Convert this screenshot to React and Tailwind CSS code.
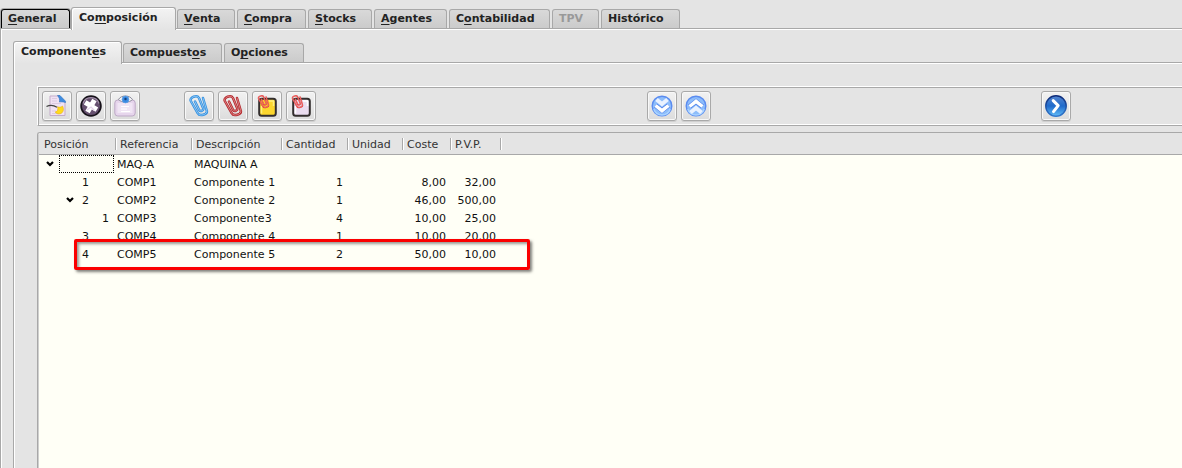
import React from "react";

const MAIN_TABS = [
  { before: "", key: "G", after: "eneral", width: "w-[69px]", focused: true },
  { before: "Co", key: "m", after: "posición", width: "w-[105px]", active: true },
  { before: "", key: "V", after: "enta", width: "w-[58px]" },
  { before: "", key: "C", after: "ompra", width: "w-[69px]" },
  { before: "", key: "S", after: "tocks", width: "w-16" },
  { before: "", key: "A", after: "gentes", width: "w-[73px]" },
  { before: "C", key: "o", after: "ntabilidad", width: "w-[101px]" },
  { before: "TPV", key: "", after: "", width: "w-[47px]", disabled: true },
  { before: "Histórico", key: "", after: "", width: "w-[79px]" },
];

const SUB_TABS = [
  { before: "Component", key: "e", after: "s", width: "w-[109px]", active: true, first: true },
  { before: "Compuest", key: "o", after: "s", width: "w-[99px]" },
  { before: "O", key: "p", after: "ciones", width: "w-20" },
];

const ROWS = [
  { depth: 0, open: true, pos: "", ref: "MAQ-A", desc: "MAQUINA A", qty: "", cost: "", price: "" },
  { depth: 1, pos: "1", ref: "COMP1", desc: "Componente 1", qty: "1", cost: "8,00", price: "32,00" },
  { depth: 1, open: true, pos: "2", ref: "COMP2", desc: "Componente 2", qty: "1", cost: "46,00", price: "500,00" },
  { depth: 2, pos: "1", ref: "COMP3", desc: "Componente3", qty: "4", cost: "10,00", price: "25,00" },
  { depth: 1, pos: "3", ref: "COMP4", desc: "Componente 4", qty: "1", cost: "10,00", price: "20,00" },
  { depth: 1, pos: "4", ref: "COMP5", desc: "Componente 5", qty: "2", cost: "50,00", price: "10,00", marked: true },
];

const INDENT = ["pl-0", "pl-5", "pl-10"];

function Tab({ tab }) {
  const idle = "h-[19px] pl-[6px] bg-linear-to-b from-[#d9d9d9] to-[#cbcbcb]";
  let look = `${idle} border-[#a8a8a8] text-[#222]`;
  if (tab.active) {
    look =
      "relative z-10 -mb-[2px] h-[23px] border-[#a8a8a8] bg-linear-to-b from-[#f3f3f3] to-[#e4e4e4] pb-[2px] pl-[7px] text-[#222] shadow-[inset_1px_1px_0_#fff] " +
      (tab.first ? "-mr-px" : "-mx-px");
  } else if (tab.focused) {
    look = `${idle} border-black text-[#222] shadow-[0_0_0_1px_#a8a8a8]`;
  } else if (tab.disabled) {
    look = `${idle} border-[#a8a8a8] text-[#999]`;
  }
  return (
    <button
      type="button"
      role="tab"
      aria-selected={!!tab.active}
      disabled={tab.disabled}
      className={`flex shrink-0 items-center rounded-t-[3px] border border-b-0 text-[11px] leading-4 font-bold whitespace-pre ${tab.width} ${look}`}
    >
      {tab.before}
      {tab.key && <span className="underline underline-offset-2">{tab.key}</span>}
      {tab.after}
    </button>
  );
}

function ToolButton({ label, children }) {
  return (
    <button
      type="button"
      aria-label={label}
      className="flex size-[30px] shrink-0 items-center justify-center rounded-[3px] border border-[#a9a9a9] bg-linear-to-b from-[#f2f2f2] to-[#dcdcdc] shadow-[inset_0_0_0_1px_#f8f8f8,0_1px_0_#cfcfcf]"
    >
      <svg width="24" height="24" viewBox="0 0 24 24" fill="none" aria-hidden="true">
        {children}
      </svg>
    </button>
  );
}

function EditIcon() {
  return (
    <>
      <path d="M5 2h9l6 6v13.500H5z" fill="#f0e2f3" stroke="#c3abc9" />
      <path d="M7 4.500h5M7 7h5M7 9.500h9M7 17h4M7 19.500h9" stroke="#dccae1" />
      <path d="M12.500 1.500h2.500l5.500 5.700v1.300c-2.500-.8-4.500-.8-6-.5.500-2.500-.3-4.500-2-6.500z" fill="#3f8de0" stroke="#2569bd" strokeWidth=".6" />
      <path d="M1.500 12.500c3.500-1.800 7-1.500 10.500.8" stroke="#444" strokeWidth="1.300" />
      <path d="M12.500 12.800c1.800.8 3.300.6 5-.8 1.800 3.200.8 7-2.300 7.800-2.200.5-4-.3-5-1.800 2.300-.5 3.300-2.200 2.300-5.200z" fill="#ffdb1c" stroke="#e8b010" strokeWidth=".6" />
    </>
  );
}

function DeleteIcon() {
  return (
    <>
      <circle cx="12" cy="12" r="9.900" fill="#66506f" stroke="#17121a" strokeWidth="1.700" />
      <path d="M4 9.500a8.400 8.400 0 0 1 16 0" stroke="#a392aa" strokeWidth="1.200" />
      <g transform="rotate(-14 12 12)">
        <path d="M7.200 7l9.600 10M16.800 7l-9.600 10" stroke="#fff" strokeWidth="5" />
      </g>
      <path d="M8 16l4-3 3.500 3.500" stroke="#e4d3ea" strokeWidth="1.200" />
    </>
  );
}

function ViewIcon() {
  return (
    <>
      <rect x="1.800" y="6" width="20.400" height="16" rx="3" fill="#e6d5ec" stroke="#bda9c6" />
      <path d="M4.500 9h15v10h-15z" fill="#f0e5f4" />
      <path d="M8 12.500h8M8 15h6M8 17.500h9" stroke="#fff" strokeWidth="1.200" />
      <path d="M5.500 5.500C8 .8 16.500.8 19.500 5.500 16.500 9 8.500 9 5.500 5.500z" fill="#f5f5f8" stroke="#8d8d9c" />
      <circle cx="12.500" cy="5.500" r="3.400" fill="#3b8be2" stroke="#5c9fe6" strokeWidth=".8" />
      <circle cx="12.500" cy="5" r="1.200" fill="#163e79" />
    </>
  );
}

const CLIP =
  "M16 4l3.800 12.800c.9 3.700-7.300 6-9 2.500L3.800 7C2.200 3.200 10 .4 12 4l4.200 10.300c.8 2.500-3.200 3.700-4.200 1.400L8 7.500";

function ClipIcon({ dark, light }) {
  return (
    <>
      <path d={CLIP} stroke={dark} strokeWidth="2.500" strokeLinecap="round" strokeLinejoin="round" />
      <path d={CLIP} stroke={light} strokeWidth=".6" strokeLinecap="round" strokeLinejoin="round" />
    </>
  );
}

function PasteIcon({ fill, shine }) {
  return (
    <>
      <rect x="4.200" y="4.800" width="16.600" height="17" rx="2.500" fill={fill} stroke="#332e2e" strokeWidth="2" />
      <path d="M6.500 19.500V12M14 7h4.500v5" stroke={shine} strokeWidth="1.500" />
      <g transform="translate(1.200 .4) scale(.62)">
        <path d={CLIP} stroke="#e03c3c" strokeWidth="2.300" strokeLinecap="round" />
        <path d={CLIP} stroke="#ffaaa6" strokeWidth=".6" strokeLinecap="round" />
      </g>
    </>
  );
}

function DoubleChevronIcon({ up }) {
  return (
    <>
      <circle cx="12" cy="12" r="9.800" fill="#8dbdfb" stroke="#5b8cf0" strokeWidth="1.400" />
      <path d="M3.800 15a8.600 8.600 0 0 0 16.400 0" stroke="#a9d3ff" strokeWidth="1.500" />
      <g transform={up ? "rotate(180 12 12)" : undefined}>
        <path d="M6.500 5.500L12 10l5.500-4.500" stroke="#eaf2ff" strokeWidth="4" />
        <path d="M5.500 11.300L12 16.500l6.500-5.200" stroke="#4f80ea" strokeWidth="4.800" />
        <path d="M5.500 11.500L12 16.700l6.500-5.200" stroke="#fff" strokeWidth="3.400" />
      </g>
    </>
  );
}

function NextIcon() {
  return (
    <>
      <defs>
        <linearGradient id="next-fill" x1="0" y1="0" x2="0" y2="1">
          <stop offset="0" stopColor="#5585cf" />
          <stop offset=".5" stopColor="#1f6acb" />
          <stop offset="1" stopColor="#62bdf8" />
        </linearGradient>
        <linearGradient id="next-rim" x1="0" y1="0" x2="0" y2="1">
          <stop offset="0" stopColor="#0d2a78" />
          <stop offset="1" stopColor="#2f78cf" />
        </linearGradient>
      </defs>
      <circle cx="12" cy="12" r="10.200" fill="url(#next-fill)" stroke="url(#next-rim)" strokeWidth="1.500" />
      <path d="M9.200 6.600l5 5-4.700 6" stroke="#fff" strokeWidth="3" strokeLinecap="round" strokeLinejoin="round" />
    </>
  );
}

function Expander() {
  return (
    <button type="button" aria-label="Contraer" className="flex h-[18px] w-5 shrink-0 items-center justify-center pl-[2px]">
      <svg width="8" height="6" viewBox="0 0 8 6" fill="none" aria-hidden="true">
        <path d="M1 1l3 3 3-3" stroke="#000" strokeWidth="2.200" />
      </svg>
    </button>
  );
}

function HeaderCell({ children, first }) {
  return (
    <th className="h-[22px] border-b border-[#a8a8a8] p-0 text-left font-normal">
      <div className="flex h-[21px] items-center">
        <span className={first ? "flex-1 pt-[3px] pl-[5px]" : "flex-1 pt-[3px] pl-[3px]"}>{children}</span>
        <span className="h-3 w-[2px] border-l border-[#a8a8a8] bg-white" />
      </div>
    </th>
  );
}

function Row({ row }) {
  return (
    <tr className="h-[18px]">
      <td className="relative p-0">
        <div className={`flex h-[18px] ${INDENT[row.depth]}`}>
          {row.open ? <Expander /> : <span className="w-5 shrink-0" />}
          {row.depth === 0 ? (
            <span className="mr-[3px] flex-1 border border-dotted border-black" />
          ) : (
            <span className="pl-[3px] leading-5">{row.pos}</span>
          )}
        </div>
        {row.marked && (
          <span className="pointer-events-none absolute -top-[6px] left-[35px] z-10 h-[31px] w-[456px] rounded-[2px] border-3 border-[#fb0000] shadow-[2px_2px_3px_rgba(0,0,0,0.5),inset_2px_2px_3px_rgba(0,0,0,0.4)]" />
        )}
      </td>
      <td className="p-0"><div className="h-[18px]">{row.ref}</div></td>
      <td className="p-0 pl-px"><div className="h-[18px]">{row.desc}</div></td>
      <td className="p-0 pr-[6px] text-right"><div className="h-[18px]">{row.qty}</div></td>
      <td className="p-0" />
      <td className="p-0 pr-[6px] text-right"><div className="h-[18px]">{row.cost}</div></td>
      <td className="p-0 pr-[6px] text-right"><div className="h-[18px]">{row.price}</div></td>
      <td className="p-0" />
    </tr>
  );
}

export default function App() {
  return (
    <div className="flex h-screen flex-col overflow-hidden bg-[#e4e4e4] pt-[7px] font-['DejaVu_Sans',sans-serif] text-[11px] text-[#111]">
      <div role="tablist" className="flex items-end gap-[2px] pl-px">
        {MAIN_TABS.map((tab) => (
          <Tab key={tab.before + tab.key + tab.after} tab={tab} />
        ))}
      </div>

      <main className="flex min-h-0 flex-1 flex-col border-t border-l border-[#a8a8a8] pt-3 pl-3 shadow-[inset_1px_1px_0_#fff]">
        <div role="tablist" className="flex items-end gap-[2px]">
          {SUB_TABS.map((tab) => (
            <Tab key={tab.before + tab.key + tab.after} tab={tab} />
          ))}
        </div>

        <section className="flex min-h-0 flex-1 flex-col border-t border-l border-[#a8a8a8] pt-[23px] pl-[23px] shadow-[inset_1px_1px_0_#fff]">
          <div
            role="toolbar"
            className="flex items-center border-t border-b border-l border-t-white border-b-[#a8a8a8] border-l-white py-1 pr-[111px] pl-1 shadow-[inset_1px_1px_0_#a8a8a8,inset_0_-1px_0_#fff]"
          >
            <div className="flex gap-1">
              <ToolButton label="Editar"><EditIcon /></ToolButton>
              <ToolButton label="Eliminar"><DeleteIcon /></ToolButton>
              <ToolButton label="Ver"><ViewIcon /></ToolButton>
            </div>
            <div className="ml-11 flex gap-1">
              <ToolButton label="Adjuntar"><ClipIcon dark="#3390e0" light="#c3e6ff" /></ToolButton>
              <ToolButton label="Quitar adjunto"><ClipIcon dark="#b3262b" light="#f3b9b9" /></ToolButton>
              <ToolButton label="Pegar"><PasteIcon fill="#fcd62d" shine="#fff07c" /></ToolButton>
              <ToolButton label="Pegar copia"><PasteIcon fill="#eadcef" shine="#fff" /></ToolButton>
            </div>
            <div className="flex-1" />
            <div className="flex gap-1">
              <ToolButton label="Bajar"><DoubleChevronIcon /></ToolButton>
              <ToolButton label="Subir"><DoubleChevronIcon up /></ToolButton>
            </div>
            <div className="flex-1" />
            <ToolButton label="Siguiente"><NextIcon /></ToolButton>
          </div>

          <div className="mt-[6px] min-h-0 flex-1 overflow-hidden rounded-tl-[3px] border-t border-l border-[#a8a8a8] bg-[#fffff6]">
            <div className="h-full border-l border-[#cfcfcf]">
              <table className="w-full table-fixed border-separate border-spacing-0 leading-5">
                <colgroup>
                  <col className="w-[78px]" />
                  <col className="w-[76px]" />
                  <col className="w-[90px]" />
                  <col className="w-[66px]" />
                  <col className="w-[55px]" />
                  <col className="w-12" />
                  <col className="w-[50px]" />
                  <col />
                </colgroup>
                <thead className="bg-[#e4e4e4] text-[#333]">
                  <tr>
                    <HeaderCell first>Posición</HeaderCell>
                    <HeaderCell>Referencia</HeaderCell>
                    <HeaderCell>Descripción</HeaderCell>
                    <HeaderCell>Cantidad</HeaderCell>
                    <HeaderCell>Unidad</HeaderCell>
                    <HeaderCell>Coste</HeaderCell>
                    <HeaderCell>P.V.P.</HeaderCell>
                    <th className="border-b border-[#a8a8a8] p-0" />
                  </tr>
                </thead>
                <tbody>
                  {ROWS.map((row) => (
                    <Row key={row.ref} row={row} />
                  ))}
                </tbody>
              </table>
            </div>
          </div>
        </section>
      </main>
    </div>
  );
}
